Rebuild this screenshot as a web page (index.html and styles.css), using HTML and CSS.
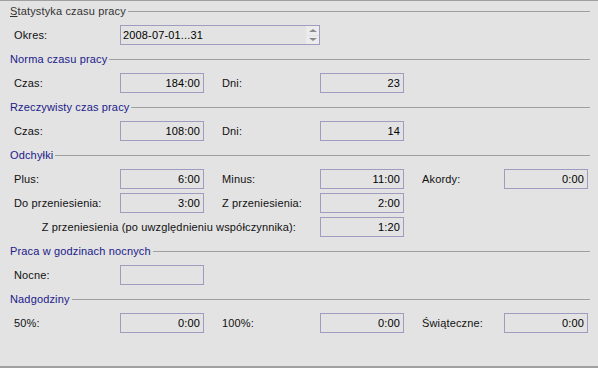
FILE: index.html
```html
<!DOCTYPE html>
<html lang="pl">
<head>
    <meta charset="UTF-8">
    <title>Statystyka czasu pracy</title>
    <link rel="stylesheet" href="styles.css">
</head>
<body>

<div class="panel">
    <div class="group">
        <div class="group-title main"><span><u>S</u>tatystyka czasu pracy</span></div>
        <div class="row">
            <div class="label">Okres:</div>
            <div class="field wide">
                <span class="field-text">2008-07-01...31</span>
                <div class="spinner">
                    <div class="spin-btn"><span class="arrow up"></span></div>
                    <div class="spin-btn"><span class="arrow down"></span></div>
                </div>
            </div>
        </div>
    </div>

    <div class="group">
        <div class="group-title"><span>Norma czasu pracy</span></div>
        <div class="row">
            <div class="label">Czas:</div>
            <div class="field">184:00</div>
            <div class="label second">Dni:</div>
            <div class="field">23</div>
        </div>
    </div>

    <div class="group">
        <div class="group-title"><span>Rzeczywisty czas pracy</span></div>
        <div class="row">
            <div class="label">Czas:</div>
            <div class="field">108:00</div>
            <div class="label second">Dni:</div>
            <div class="field">14</div>
        </div>
    </div>

    <div class="group">
        <div class="group-title"><span>Odchyłki</span></div>
        <div class="row">
            <div class="label">Plus:</div>
            <div class="field">6:00</div>
            <div class="label second">Minus:</div>
            <div class="field">11:00</div>
            <div class="label third">Akordy:</div>
            <div class="field">0:00</div>
        </div>
        <div class="row">
            <div class="label">Do przeniesienia:</div>
            <div class="field">3:00</div>
            <div class="label second">Z przeniesienia:</div>
            <div class="field">2:00</div>
        </div>
        <div class="row">
            <div class="label long">Z przeniesienia (po uwzględnieniu współczynnika):</div>
            <div class="field">1:20</div>
        </div>
    </div>

    <div class="group">
        <div class="group-title"><span>Praca w godzinach nocnych</span></div>
        <div class="row">
            <div class="label">Nocne:</div>
            <div class="field"></div>
        </div>
    </div>

    <div class="group">
        <div class="group-title"><span>Nadgodziny</span></div>
        <div class="row">
            <div class="label">50%:</div>
            <div class="field">0:00</div>
            <div class="label second">100%:</div>
            <div class="field">0:00</div>
            <div class="label third">Świąteczne:</div>
            <div class="field">0:00</div>
        </div>
    </div>
</div>

</body>
</html>
```

FILE: styles.css
```css
body {
    margin: 0;
    padding: 0;
    background-color: #e3e3e3;
    font-family: "Liberation Sans", Arial, sans-serif;
    font-size: 11px;
    letter-spacing: 0.15px;
    color: #111;
}
.panel {
    height: 368px;
    box-sizing: border-box;
    box-shadow: inset 0 1px #a0a0a0, inset 0 -2px #a0a0a0;
}
.group {
    padding-bottom: 3px;
}
.group-title {
    height: 25px;
    display: flex;
    align-items: flex-start;
    margin: 0 8px 0 10px;
}
.group-title span {
    color: #20208a;
    line-height: 13px;
    margin-top: 5px;
    padding-right: 2px;
    white-space: nowrap;
}
.group-title.main span {
    color: #333;
}
.group-title::after {
    content: "";
    flex: 1;
    height: 1px;
    margin-top: 11px;
    background-color: #a0a0a0;
}
.row {
    display: flex;
    align-items: center;
    height: 20px;
    padding-left: 14px;
    margin-bottom: 4px;
}
.row:last-child {
    margin-bottom: 0;
}
.label {
    width: 106px;
    white-space: nowrap;
}
.label.second {
    width: 98px;
    margin-left: 18px;
}
.label.third {
    width: 82px;
    margin-left: 18px;
}
.label.long {
    width: 282px;
    padding-right: 24px;
    text-align: right;
}
.field {
    width: 84px;
    height: 20px;
    box-sizing: border-box;
    border: 1px solid #a09cc0;
    padding: 0 3px;
    display: flex;
    align-items: center;
    justify-content: flex-end;
    color: #000;
}
.field.wide {
    width: 200px;
    padding: 0 0 0 2px;
    justify-content: space-between;
}
.spinner {
    width: 13px;
    height: 18px;
    display: flex;
    flex-direction: column;
    gap: 1px;
}
.spin-btn {
    flex: 1;
    background-color: #ececec;
    display: flex;
    align-items: center;
    justify-content: center;
}
.arrow {
    width: 0;
    height: 0;
    border-left: 4px solid transparent;
    border-right: 4px solid transparent;
}
.arrow.up {
    border-bottom: 3px solid #8a8a8a;
}
.arrow.down {
    border-top: 3px solid #8a8a8a;
}
```
